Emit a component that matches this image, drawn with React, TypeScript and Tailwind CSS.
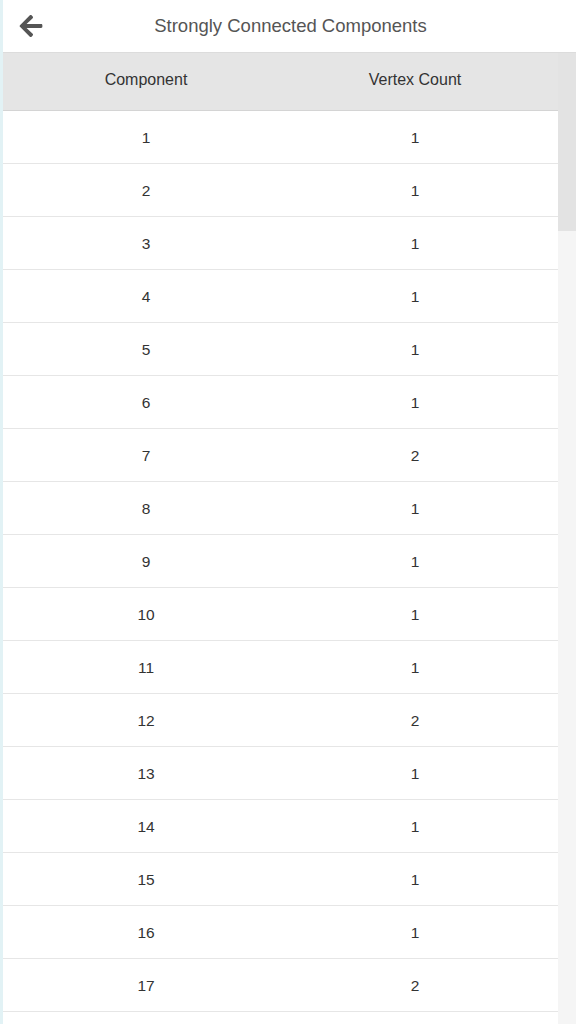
import { FaArrowLeft } from "react-icons/fa";

const rows: [number, number][] = [
  [1, 1], [2, 1], [3, 1], [4, 1], [5, 1], [6, 1], [7, 2], [8, 1], [9, 1],
  [10, 1], [11, 1], [12, 2], [13, 1], [14, 1], [15, 1], [16, 1], [17, 2],
];

export default function App() {
  return (
    <div
      className="flex h-[1024px] w-[576px] flex-col overflow-hidden border-l-[3px] border-[#e2f2f5] bg-white text-[#333]"
      style={{ fontFamily: '"Liberation Sans", Arial, sans-serif' }}
    >
      {/* Barra superior */}
      <header className="relative flex h-[53px] shrink-0 items-center justify-center border-b border-[#dcdcdc]">
        <button className="absolute left-[15px] top-[13px] text-[#555]" aria-label="Back">
          <FaArrowLeft className="h-[26px] w-[26px]" />
        </button>
        <h1 className="pl-[2px] text-[18.5px] text-[#555]">Strongly Connected Components</h1>
      </header>

      <div className="flex min-h-0 flex-1">
        <div className="min-w-0 flex-1">
          <div className="grid h-[58px] grid-cols-[286px_252px] items-center border-b border-[#d4d4d4] bg-[#e5e5e5] pb-[3px] text-[16px]">
            <div className="text-center">Component</div>
            <div className="text-center">Vertex Count</div>
          </div>
          {rows.map(([c, n]) => (
            <div
              key={c}
              className="grid h-[53px] grid-cols-[286px_252px] items-center border-b border-[#e6e6e6] pt-[1px] text-[15.5px]"
            >
              <div className="text-center">{c}</div>
              <div className="text-center">{n}</div>
            </div>
          ))}
        </div>
        {/* Barra de desplazamiento */}
        <div className="flex w-[18px] shrink-0 flex-col bg-[#f5f5f5]">
          <div className="h-[178px] bg-[#e3e3e3]" />
        </div>
      </div>
    </div>
  );
}
